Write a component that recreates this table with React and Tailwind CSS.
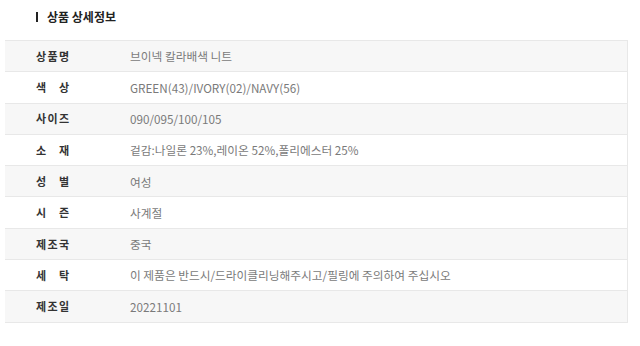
import React from "react";

const rows = [
  ["상품명", "브이넥 칼라배색 니트"],
  ["색상", "GREEN(43)/IVORY(02)/NAVY(56)"],
  ["사이즈", "090/095/100/105"],
  ["소재", "겉감:나일론 23%,레이온 52%,폴리에스터 25%"],
  ["성별", "여성"],
  ["시즌", "사계절"],
  ["제조국", "중국"],
  ["세탁", "이 제품은 반드시/드라이클리닝해주시고/필링에 주의하여 주십시오"],
  ["제조일", "20221101"],
];

function Label({ text }) {
  const chars = text.split("");
  return (
    <div className="flex w-[33px] justify-between">
      {chars.map((c, i) => (
        <span key={i}>{c}</span>
      ))}
    </div>
  );
}

export default function App() {
  return (
    <div
      className="w-[640px] h-[346px] bg-white overflow-hidden"
      style={{ fontFamily: '"Noto Sans CJK KR", "Noto Sans", sans-serif' }}
    >
      {/* title */}
      <div className="flex items-center h-[40px] pl-[36px] pb-[6px]">
        <span className="w-[2px] h-[10px] bg-[#222] mr-[9px]" />
        <h2 className="text-[12px] font-bold text-[#222] leading-none">
          상품 상세정보
        </h2>
      </div>

      {/* spec table */}
      <div className="ml-[5px] w-[623px] border-t border-[#e8e8e8]">
        {rows.map(([label, value], i) => (
          <div
            key={i}
            className={`flex items-center h-[31.3px] border-b border-r border-[#e8e8e8] ${
              i % 2 === 0 ? "bg-[#f7f7f7]" : "bg-white"
            }`}
          >
            <div className="w-[125px] pl-[31px] text-[11px] font-bold text-[#333]">
              <Label text={label} />
            </div>
            <div className="text-[11.7px] text-[#7a7a7a]">{value}</div>
          </div>
        ))}
      </div>
    </div>
  );
}
